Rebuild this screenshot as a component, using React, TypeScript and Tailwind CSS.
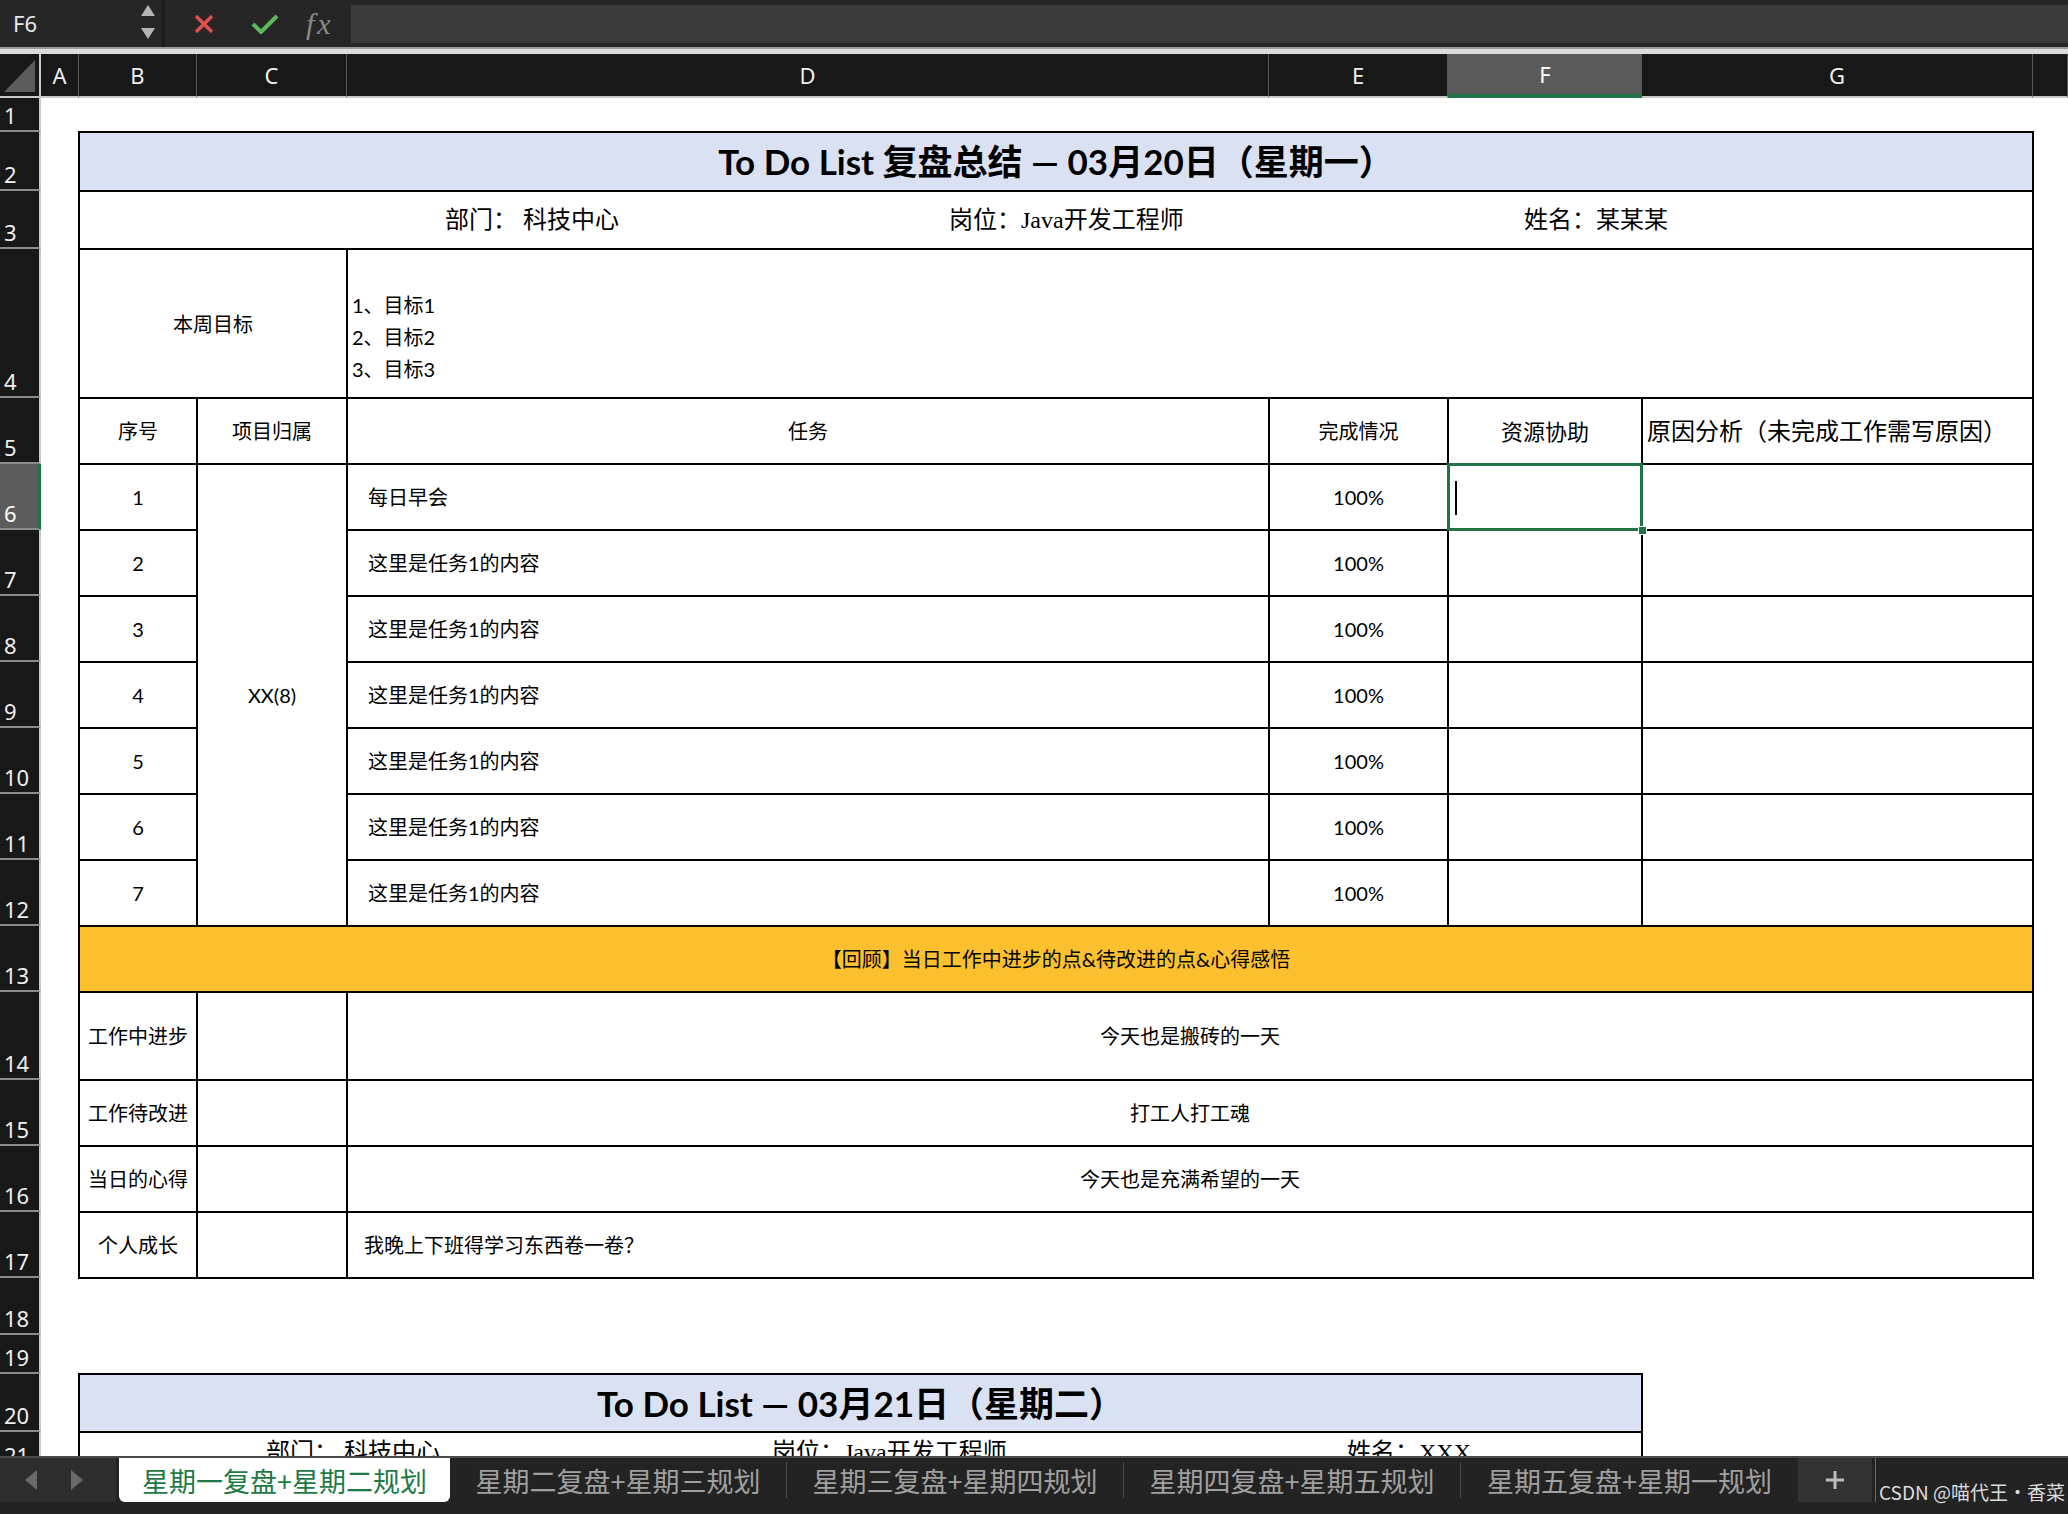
import React from 'react'

const sans = "font-['Lato','Noto_Sans_CJK_SC',sans-serif]"
const serif = "font-['Liberation_Serif','Noto_Sans_CJK_SC',serif]"
const td = 'border-2 border-black p-0 text-center align-middle'

const rowHeights = [
  'h-[34px]', 'h-[59px]', 'h-[58px]', 'h-[149px]', 'h-[66px]', 'h-[66px]', 'h-[66px]', 'h-[66px]',
  'h-[66px]', 'h-[66px]', 'h-[66px]', 'h-[66px]', 'h-[66px]', 'h-[88px]', 'h-[66px]', 'h-[66px]',
  'h-[66px]', 'h-[57px]', 'h-[39px]', 'h-[58px]', 'h-[40px]', 'h-[58px]',
]

const columns = [
  { name: 'A', w: 'w-[38px]' },
  { name: 'B', w: 'w-[118px]' },
  { name: 'C', w: 'w-[150px]' },
  { name: 'D', w: 'w-[922px]' },
  { name: 'E', w: 'w-[179px]' },
  { name: 'F', w: 'w-[194px]' },
  { name: 'G', w: 'w-[391px]' },
  { name: '', w: 'w-[35px]' },
]

const tasks = [
  '每日早会',
  '这里是任务1的内容',
  '这里是任务1的内容',
  '这里是任务1的内容',
  '这里是任务1的内容',
  '这里是任务1的内容',
  '这里是任务1的内容',
]

const review = [
  { label: '工作中进步', text: '今天也是搬砖的一天', h: 'h-[88px]', left: false },
  { label: '工作待改进', text: '打工人打工魂', h: 'h-[66px]', left: false },
  { label: '当日的心得', text: '今天也是充满希望的一天', h: 'h-[66px]', left: false },
  { label: '个人成长', text: '我晚上下班得学习东西卷一卷？', h: 'h-[66px]', left: true },
]

const tabs = ['星期二复盘+星期三规划', '星期三复盘+星期四规划', '星期四复盘+星期五规划', '星期五复盘+星期一规划']

const Toolbar = () => (
  <div className="flex h-[47px] items-center bg-[#262626]">
    <div className="relative flex h-full w-[162px] flex-none items-center">
      <span className="pl-[13px] text-[22px] text-[#e8e8e8] font-['Noto_Sans',sans-serif]">F6</span>
      <svg className="absolute left-[140px] top-[5px]" width="16" height="36" viewBox="0 0 16 36">
        <polygon points="8,0 15,11 1,11" fill="#b5b5b5" />
        <polygon points="1,23 15,23 8,34" fill="#b5b5b5" />
      </svg>
    </div>
    <div className="h-full w-[3px] bg-[#1b1b1b]" />
    <svg className="ml-[27px]" width="24" height="20" viewBox="0 0 24 20">
      <path d="M4 2 L20 18 M20 2 L4 18" stroke="#e0504d" strokeWidth="3.5" fill="none" />
    </svg>
    <svg className="ml-[34px]" width="29" height="20" viewBox="0 0 29 20">
      <path d="M3 10 L11 18 L27 2" stroke="#5cb85c" strokeWidth="4" fill="none" />
    </svg>
    <span className="ml-[27px] w-[33px] text-[30px] italic leading-none tracking-[3px] text-[#8a8a8a] font-['Liberation_Serif',serif]">
      fx
    </span>
    <div className="ml-[12px] h-[38px] flex-1 bg-[#3a3a3a]" />
  </div>
)

const ColumnHeader = () => (
  <div className="flex h-[44px] bg-[#181818]">
    <div className="h-full w-[41px] flex-none border-b-2 border-r-2 border-[#c8c8c8]">
      <svg width="39" height="42" viewBox="0 0 39 42">
        <polygon points="4,38 35,38 35,6" fill="#5c5c5c" />
      </svg>
    </div>
    {columns.map((c) => (
      <div
        key={c.name + c.w}
        className={`${c.w} flex flex-none items-center justify-center text-[22px] font-['Noto_Sans',sans-serif] ${
          c.name === 'F'
            ? 'border-b-4 border-b-[#217346] bg-[#5a5a5a] text-white'
            : 'border-b-2 border-b-[#c8c8c8] border-r border-r-[#555] text-[#eeeeee]'
        }`}
      >
        {c.name}
      </div>
    ))}
  </div>
)

const RowHeader = () => (
  <div className="flex w-[41px] flex-none flex-col bg-[#181818] font-['Noto_Sans',sans-serif]">
    {rowHeights.map((h, i) => (
      <div
        key={i}
        className={`${h} flex flex-none items-end border-b-2 border-b-[#8c8c8c] pb-[2px] pl-[4px] text-[22px] leading-[26px] ${
          i === 5
            ? 'border-r-[3px] border-r-[#217346] bg-[#5c5c5c] text-white'
            : 'border-r-2 border-r-[#c8c8c8] text-[#eeeeee]'
        }`}
      >
        {i + 1}
      </div>
    ))}
  </div>
)

const Sheet = () => (
  <table className={`w-[2027px] table-fixed border-collapse text-[20px] text-black ${sans}`}>
    <colgroup>
      {columns.map((c) => (
        <col key={c.name + c.w} className={c.w} />
      ))}
    </colgroup>
    <tbody>
      <tr className="h-[34px]">
        <td colSpan={8} />
      </tr>
      <tr className="h-[59px]">
        <td />
        <td colSpan={6} className={`${td} bg-[#d9e1f2] text-[35px] font-bold`}>
          To Do List 复盘总结 — 03月20日（星期一）
        </td>
        <td />
      </tr>
      <tr className="h-[58px]">
        <td />
        <td colSpan={6} className={`${td} ${serif} text-[24px]`}>
          <div className="flex pl-[365px] text-left">
            <span className="w-[504px]">部门： 科技中心</span>
            <span className="w-[575px]">岗位：Java开发工程师</span>
            <span>姓名：某某某</span>
          </div>
        </td>
        <td />
      </tr>
      <tr className="h-[149px]">
        <td />
        <td colSpan={2} className={td}>本周目标</td>
        <td colSpan={4} className={`${td} text-left !align-bottom`}>
          <div className="pb-[12px] pl-[4px] leading-[32px]">
            <div>1、目标1</div>
            <div>2、目标2</div>
            <div>3、目标3</div>
          </div>
        </td>
        <td />
      </tr>
      <tr className="h-[66px]">
        <td />
        <td className={td}>序号</td>
        <td className={td}>项目归属</td>
        <td className={td}>任务</td>
        <td className={td}>完成情况</td>
        <td className={`${td} text-[22px]`}>资源协助</td>
        <td className={`${td} pl-[4px] text-left text-[24px]`}>原因分析（未完成工作需写原因）</td>
        <td />
      </tr>
      {tasks.map((t, i) => (
        <tr key={i} className="h-[66px]">
          <td />
          <td className={td}>{i + 1}</td>
          {i === 0 && (
            <td rowSpan={7} className={td}>
              XX(8)
            </td>
          )}
          <td className={`${td} pl-[20px] text-left`}>{t}</td>
          <td className={td}>100%</td>
          {i === 0 ? (
            <td className={`${td} relative`}>
              <div className="absolute -bottom-[2px] -left-[2px] -right-[2px] -top-[2px] border-[3px] border-[#217346]" />
              <div className="absolute -bottom-[6px] -right-[6px] h-[9px] w-[9px] border border-white bg-[#217346]" />
              <div className="absolute left-[6px] top-[16px] h-[34px] w-[2px] bg-black" />
            </td>
          ) : (
            <td className={td} />
          )}
          <td className={td} />
          <td />
        </tr>
      ))}
      <tr className="h-[66px]">
        <td />
        <td colSpan={6} className={`${td} bg-[#fcc02e]`}>
          【回顾】当日工作中进步的点&amp;待改进的点&amp;心得感悟
        </td>
        <td />
      </tr>
      {review.map((r) => (
        <tr key={r.label} className={r.h}>
          <td />
          <td className={td}>{r.label}</td>
          <td className={td} />
          <td colSpan={4} className={`${td} ${r.left ? 'pl-[16px] text-left' : ''}`}>
            {r.text}
          </td>
          <td />
        </tr>
      ))}
      <tr className="h-[57px]">
        <td colSpan={8} />
      </tr>
      <tr className="h-[39px]">
        <td colSpan={8} />
      </tr>
      <tr className="h-[58px]">
        <td />
        <td colSpan={5} className={`${td} bg-[#d9e1f2] text-[35px] font-bold`}>
          To Do List  — 03月21日（星期二）
        </td>
        <td colSpan={2} />
      </tr>
      <tr className="h-[40px]">
        <td />
        <td colSpan={5} className={`${td} ${serif} text-[24px]`}>
          <div className="flex pl-[186px] text-left">
            <span className="w-[506px]">部门： 科技中心</span>
            <span className="w-[575px]">岗位：Java开发工程师</span>
            <span>姓名：XXX</span>
          </div>
        </td>
        <td colSpan={2} />
      </tr>
    </tbody>
  </table>
)

const TabBar = () => (
  <div className="flex h-[58px] flex-col border-t-2 border-[#4a4a4a] bg-[#232323] font-['Noto_Sans_CJK_SC',sans-serif]">
    <div className="flex h-[44px]">
      <div className="flex w-[116px] flex-none items-center bg-[#2e2e2e]">
        <svg className="ml-[25px]" width="12" height="20" viewBox="0 0 12 20">
          <polygon points="12,0 12,20 0,10" fill="#6a6a6a" />
        </svg>
        <svg className="ml-[34px]" width="12" height="20" viewBox="0 0 12 20">
          <polygon points="0,0 12,10 0,20" fill="#6a6a6a" />
        </svg>
      </div>
      <div className="ml-[3px] flex w-[331px] flex-none items-center justify-center rounded-b-[6px] bg-white pt-[3px] text-[27px] text-[#1e7a44]">
        星期一复盘+星期二规划
      </div>
      {tabs.map((t, i) => (
        <div key={t} className="flex w-[337px] flex-none items-center">
          <div className="flex-1 pt-[3px] text-center text-[27px] text-[#a0a0a0]">{t}</div>
          {i < 3 && <div className="h-[36px] w-px bg-[#4d4d4d]" />}
        </div>
      ))}
      <div className="flex w-[74px] flex-none items-center justify-center bg-[#333333]">
        <svg width="20" height="20" viewBox="0 0 20 20">
          <path d="M10 1 V19 M1 10 H19" stroke="#bdbdbd" strokeWidth="3" />
        </svg>
      </div>
      <div className="ml-[3px] flex flex-1 items-end border-l border-[#666] pb-[1px] pl-[3px] text-[19px] leading-none text-[#dddddd]">
        CSDN @喵代王·香菜
      </div>
    </div>
  </div>
)

const App = () => {
  return (
    <div className="flex h-[1514px] w-[2068px] flex-col overflow-hidden bg-white">
      <Toolbar />
      <div className="h-[7px] border-t-2 border-[#9a9a9a] bg-[#dcdcdc]" />
      <ColumnHeader />
      <div className="flex h-[1358px] overflow-hidden">
        <RowHeader />
        <div className="flex-1 overflow-hidden bg-white">
          <Sheet />
        </div>
      </div>
      <TabBar />
    </div>
  )
}

export default App
